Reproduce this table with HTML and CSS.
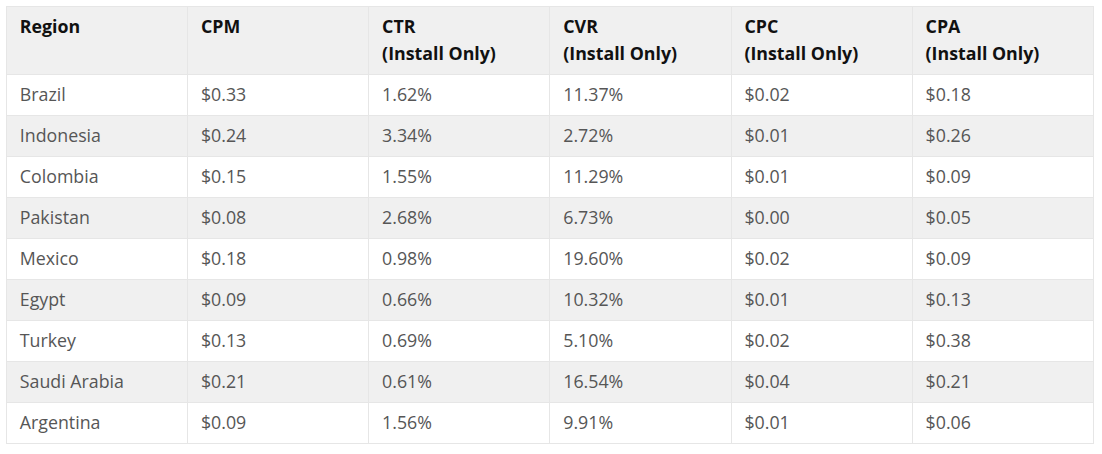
FILE: index.html
```html
<!DOCTYPE html>
<html lang="en">
<head>
<meta charset="utf-8">
<title>Region metrics</title>
<link rel="stylesheet" href="styles.css">
</head>
<body>
<table class="metrics">
  <thead>
    <tr>
      <th>Region</th>
      <th>CPM</th>
      <th>CTR<br>(Install Only)</th>
      <th>CVR<br>(Install Only)</th>
      <th>CPC<br>(Install Only)</th>
      <th>CPA<br>(Install Only)</th>
    </tr>
  </thead>
  <tbody>
    <tr><td>Brazil</td><td>$0.33</td><td>1.62%</td><td>11.37%</td><td>$0.02</td><td>$0.18</td></tr>
    <tr><td>Indonesia</td><td>$0.24</td><td>3.34%</td><td>2.72%</td><td>$0.01</td><td>$0.26</td></tr>
    <tr><td>Colombia</td><td>$0.15</td><td>1.55%</td><td>11.29%</td><td>$0.01</td><td>$0.09</td></tr>
    <tr><td>Pakistan</td><td>$0.08</td><td>2.68%</td><td>6.73%</td><td>$0.00</td><td>$0.05</td></tr>
    <tr><td>Mexico</td><td>$0.18</td><td>0.98%</td><td>19.60%</td><td>$0.02</td><td>$0.09</td></tr>
    <tr><td>Egypt</td><td>$0.09</td><td>0.66%</td><td>10.32%</td><td>$0.01</td><td>$0.13</td></tr>
    <tr><td>Turkey</td><td>$0.13</td><td>0.69%</td><td>5.10%</td><td>$0.02</td><td>$0.38</td></tr>
    <tr><td>Saudi Arabia</td><td>$0.21</td><td>0.61%</td><td>16.54%</td><td>$0.04</td><td>$0.21</td></tr>
    <tr><td>Argentina</td><td>$0.09</td><td>1.56%</td><td>9.91%</td><td>$0.01</td><td>$0.06</td></tr>
  </tbody>
</table>
</body>
</html>
```
FILE: styles.css
```css
html, body {
  margin: 0;
  padding: 0;
  background: #ffffff;
}

body {
  font-family: "Open Sans", "Noto Sans", sans-serif;
  font-size: 17.8px;
  line-height: 27.2px;
  color: #565656;
}

.metrics {
  margin: 6px;
  width: 1088px;
  table-layout: fixed;
  border-collapse: collapse;
  border: 1px solid #e6e6e6;
}

.metrics th,
.metrics td {
  border: 1px solid #e6e6e6;
  padding: 5.6px 12.8px 7.2px;
  text-align: left;
  vertical-align: top;
}

.metrics th {
  background: #f0f0f0;
  color: #111111;
  font-weight: 700;
}

.metrics tbody tr:nth-child(even) td {
  background: #f0f0f0;
}
```
